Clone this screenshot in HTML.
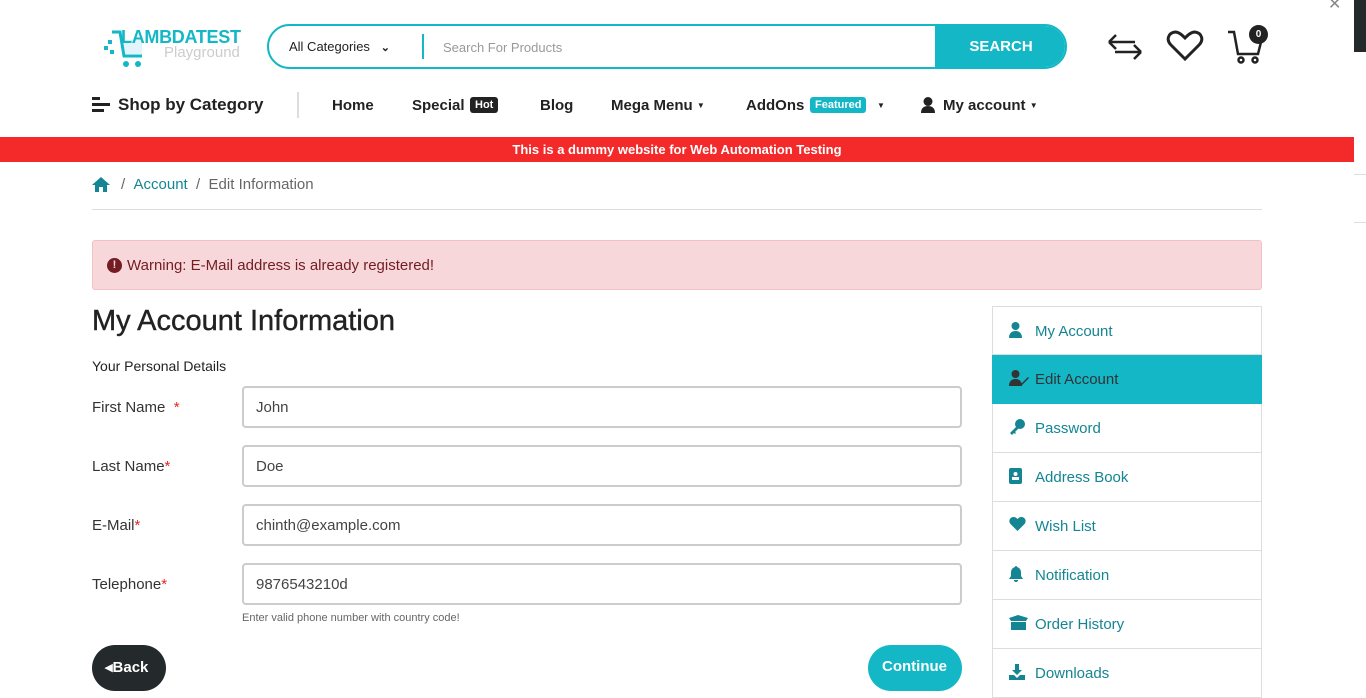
<!DOCTYPE html>
<html><head><meta charset="utf-8"><style>
*{box-sizing:border-box;margin:0;padding:0}
body{width:1366px;height:682px;overflow:hidden;background:#fff;font-family:"Liberation Sans",sans-serif;color:#222;position:relative}
.a{position:absolute}
.nav{font-size:15px;font-weight:bold;color:#222;top:97px}
.tl{color:#148593}
.lbl{font-size:15px;color:#333;left:92px}
.inp{left:242px;width:720px;height:42px;border:2px solid #ccc;border-radius:4px;font-size:15px;color:#444;padding:11px 12px}
.req{color:#e22}
.sb{left:992px;width:270px;height:49px;border:1px solid #ddd;border-top:none;font-size:15px;color:#148593;padding:16px 0 0 42px}
.sb svg{position:absolute;left:16px;top:15px}
</style></head><body>
<div class="a" style="left:1354px;top:0;width:12px;height:52px;background:#24292b"></div>
<div class="a" style="left:1328px;top:-6px;color:#888;font-size:16px">✕</div>
<!-- logo -->
<svg class="a" style="left:102px;top:28px" width="42" height="44" viewBox="0 0 42 44"><rect x="2" y="18" width="4" height="4" fill="#13b7c6"/><rect x="6" y="12" width="4" height="4" fill="#13b7c6"/><rect x="8" y="22" width="4" height="4" fill="#13b7c6"/><rect x="20" y="12" width="20" height="14" fill="#e3f4fb"/><path d="M10 4h8l4 24h18" stroke="#13b7c6" stroke-width="3" fill="none"/><circle cx="24" cy="36" r="3" fill="#13b7c6"/><circle cx="36" cy="36" r="3" fill="#13b7c6"/></svg>
<div class="a" style="left:121px;top:27px;font-size:18px;font-weight:bold;color:#13b7c6;letter-spacing:-0.3px">LAMBDATEST</div>
<div class="a" style="left:164px;top:44px;font-size:15px;color:#ccc">Playground</div>
<!-- search -->
<div class="a" style="left:267px;top:24px;width:800px;height:45px;border:2px solid #13b7c6;border-radius:23px;overflow:hidden">
<div class="a" style="left:20px;top:13px;font-size:13px;color:#222">All Categories &nbsp;&nbsp;<b style="font-size:11px">⌄</b></div>
<div class="a" style="left:153px;top:8px;width:2px;height:25px;background:#13b7c6"></div>
<div class="a" style="left:174px;top:14px;font-size:13px;color:#999">Search For Products</div>
<div class="a" style="left:666px;top:0;width:132px;height:41px;background:#13b7c6;color:#fff;font-weight:bold;font-size:15px;text-align:center;line-height:41px">SEARCH</div>
</div>
<svg class="a" style="left:1106px;top:32px" width="38" height="30" viewBox="0 0 38 30" fill="none" stroke="#222" stroke-width="2.5"><path d="M3 10h26M3 10l7-7M3 10l7 7M35 20H9M35 20l-7-7M35 20l-7 7"/></svg>
<svg class="a" style="left:1166px;top:30px" width="38" height="32" viewBox="0 0 38 32"><path d="M19 29L5 15C0 10 2 3 9 2c4 0 7 3 10 6 3-3 6-6 10-6 7 1 9 8 4 13z" fill="none" stroke="#222" stroke-width="3"/></svg>
<svg class="a" style="left:1226px;top:28px" width="40" height="38" viewBox="0 0 40 38" fill="none" stroke="#222" stroke-width="2.5"><path d="M2 4h6l4 22h20l3-12"/><circle cx="15" cy="32" r="2.5"/><circle cx="29" cy="32" r="2.5"/></svg>
<div class="a" style="left:1249px;top:25px;width:19px;height:19px;border-radius:50%;background:#222;color:#fff;font-size:10px;font-weight:bold;text-align:center;line-height:19px">0</div>
<!-- nav -->
<svg class="a" style="left:92px;top:97px" width="18" height="16"><rect y="0" width="8" height="3" fill="#222"/><rect y="6" width="18" height="3" fill="#222"/><rect y="12" width="12" height="3" fill="#222"/></svg>
<div class="a nav" style="left:118px;top:95px;font-size:17px">Shop by Category</div>
<div class="a" style="left:297px;top:92px;width:2px;height:26px;background:#ddd"></div>
<div class="a nav" style="left:332px">Home</div>
<div class="a nav" style="left:412px">Special</div>
<div class="a" style="left:470px;top:97px;background:#222;color:#fff;font-size:11px;font-weight:bold;padding:2px 5px;border-radius:3px">Hot</div>
<div class="a nav" style="left:540px">Blog</div>
<div class="a nav" style="left:611px">Mega Menu <span style="font-size:8px;vertical-align:2px">▼</span></div>
<div class="a nav" style="left:746px">AddOns</div>
<div class="a" style="left:810px;top:97px;background:#13b7c6;color:#fff;font-size:11px;font-weight:bold;padding:2px 5px;border-radius:3px">Featured</div>
<div class="a nav" style="left:877px;font-size:8px;top:101px">▼</div>
<svg class="a" style="left:921px;top:97px" width="14" height="16"><circle cx="7" cy="4.5" r="4.5" fill="#222"/><path d="M0 16c0-5 3-7 7-7s7 2 7 7z" fill="#222"/></svg>
<div class="a nav" style="left:943px">My account <span style="font-size:8px;vertical-align:2px">▼</span></div>
<div class="a" style="left:0;top:137px;width:1354px;height:25px;background:#f42a2a;color:#fff;font-size:13px;font-weight:bold;text-align:center;line-height:25px">This is a dummy website for Web Automation Testing</div>
<div class="a" style="left:1354px;top:174px;width:12px;height:1px;background:#ddd"></div>
<div class="a" style="left:1354px;top:222px;width:12px;height:1px;background:#ddd"></div>
<!-- breadcrumb -->
<svg class="a" style="left:92px;top:176px" width="18" height="16" viewBox="0 0 18 16"><path d="M9 1L0 9h3v7h4v-5h4v5h4V9h3z" fill="#148593"/></svg>
<div class="a" style="left:121px;top:176px;font-size:15px;color:#666">/ &nbsp;<span class="tl">Account</span> &nbsp;/ &nbsp;Edit Information</div>
<div class="a" style="left:92px;top:209px;width:1170px;height:1px;background:#ddd"></div>
<div class="a" style="left:92px;top:240px;width:1170px;height:50px;background:#f8d7da;border:1px solid #f2c1c6;border-radius:3px;color:#721c24;font-size:15px;padding:16px 0 0 34px">Warning: E-Mail address is already registered!</div>
<div class="a" style="left:107px;top:258px;width:15px;height:15px;border-radius:50%;background:#721c24;color:#f8d7da;font-size:11px;font-weight:bold;text-align:center;line-height:15px">!</div>
<div class="a" style="left:92px;top:305px;font-size:29px;color:#222;-webkit-text-stroke:0.4px #222">My Account Information</div>
<div class="a" style="left:92px;top:358px;font-size:14px;color:#222">Your Personal Details</div>
<div class="a lbl" style="top:399px">First Name &nbsp;<span class="req">*</span></div>
<div class="a inp" style="top:386px">John</div>
<div class="a lbl" style="top:458px">Last Name<span class="req">*</span></div>
<div class="a inp" style="top:445px">Doe</div>
<div class="a lbl" style="top:517px">E-Mail<span class="req">*</span></div>
<div class="a inp" style="top:504px">chinth@example.com</div>
<div class="a lbl" style="top:576px">Telephone<span class="req">*</span></div>
<div class="a inp" style="top:563px">9876543210d</div>
<div class="a" style="left:242px;top:612px;font-size:11px;color:#666">Enter valid phone number with country code!</div>
<div class="a" style="left:92px;top:645px;width:74px;height:46px;border-radius:23px;background:#24292b;color:#fff;font-size:15px;font-weight:bold;padding:13px 0 0 13px">◂Back</div>
<div class="a" style="left:868px;top:645px;width:94px;height:46px;border-radius:23px;background:#13b7c6;color:#fff;font-size:15px;font-weight:bold;padding:13px 0 0 14px">Continue</div>
<!-- sidebar -->
<div class="a sb" style="top:306px;height:49px;border-top:1px solid #ddd"><svg width="13" height="16"><circle cx="6.5" cy="4" r="4" fill="#148593"/><path d="M0 16c0-5 3-7 6.5-7s6.5 2 6.5 7z" fill="#148593"/></svg>My Account</div>
<div class="a sb" style="top:355px;background:#13b7c6;border-color:#13b7c6;color:#333"><svg width="20" height="16"><circle cx="6.5" cy="4" r="4" fill="#333"/><path d="M0 16c0-5 3-7 6.5-7s6.5 2 6.5 7z" fill="#333"/><path d="M12 14l7-7 1 1-7 7z" fill="#333"/></svg>Edit Account</div>
<div class="a sb" style="top:404px"><svg width="16" height="16"><circle cx="11" cy="5" r="5" fill="#148593"/><path d="M8 7L1 14l2 2 2-2 1 1 1-1-1-1 4-4z" fill="#148593"/></svg>Password</div>
<div class="a sb" style="top:453px"><svg width="14" height="16"><rect x="0" y="0" width="13" height="16" rx="2" fill="#148593"/><circle cx="6.5" cy="6" r="2" fill="#fff"/><rect x="3" y="9" width="7" height="3" fill="#fff"/></svg>Address Book</div>
<div class="a sb" style="top:502px"><svg width="17" height="15" viewBox="0 0 17 15"><path d="M8.5 14L1.5 7C-1 4 1 0 4.5 0c2 0 3 1 4 2 1-1 2-2 4-2 3.5 0 5.5 4 3 7z" fill="#148593"/></svg>Wish List</div>
<div class="a sb" style="top:551px"><svg width="14" height="16"><path d="M7 0c1 0 1 1 1 1 3 1 4 3 4 6v3l2 3H0l2-3V7c0-3 1-5 4-6 0 0 0-1 1-1zM5 14h4a2 2 0 0 1-4 0z" fill="#148593"/></svg>Notification</div>
<div class="a sb" style="top:600px"><svg width="19" height="16"><path d="M0 3l9-3 10 3-2 3H2zM2 7h15v8H2z" fill="#148593"/></svg>Order History</div>
<div class="a sb" style="top:649px"><svg width="16" height="16"><path d="M6 0h4v6h3L8 11 3 6h3zM0 11h5l3 3 3-3h5v5H0z" fill="#148593"/></svg>Downloads</div>
</body></html>
